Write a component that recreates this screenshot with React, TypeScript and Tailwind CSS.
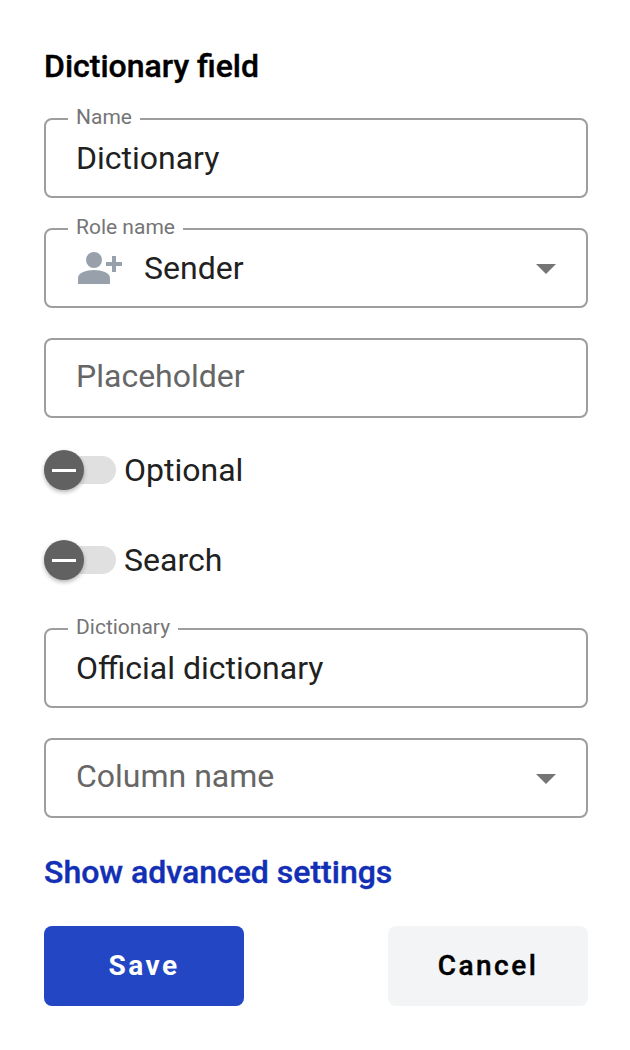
import { useState } from "react";
import type { ReactNode } from "react";

type FieldProps = {
  label?: string;
  select?: boolean;
  children: ReactNode;
};

function Field({ label, select, children }: FieldProps) {
  return (
    <div className="relative flex h-20 items-center justify-between rounded-lg border-2 border-[#9e9e9e] px-[30px] text-[32px] leading-10 text-[#212121]">
      {label && (
        <span className="absolute -top-[17px] left-[22px] bg-white px-2 text-[21px] leading-7 text-[#757575]">
          {label}
        </span>
      )}
      <div className="flex items-center">{children}</div>
      {select && (
        <svg className="mt-0.5 h-[10px] w-5" viewBox="0 0 20 10" fill="#757575">
          <path d="M0 0h20L10 10z" />
        </svg>
      )}
    </div>
  );
}

function PersonAddIcon() {
  return (
    <svg className="mr-[22px] h-8 w-[46px]" viewBox="0 0 46 32" fill="#98a1ab">
      <circle cx="18" cy="8" r="8" />
      <path d="M2 32v-6c0-5.300 8-8 16-8s16 2.700 16 8v6z" />
      <path d="M36 4h4v6h6v4h-6v6h-4v-6h-6v-4h6z" />
    </svg>
  );
}

function Toggle({ label }: { label: string }) {
  const [checked, setChecked] = useState(false);

  return (
    <button
      role="switch"
      aria-checked={checked}
      onClick={() => setChecked(!checked)}
      className="flex h-10 items-center gap-2 text-[32px] leading-10 text-[#212121]"
    >
      <span
        className={
          checked
            ? "flex h-7 w-[72px] items-center justify-end rounded-full bg-[#a7b5e8]"
            : "flex h-7 w-[72px] items-center rounded-full bg-[#e0e0e0]"
        }
      >
        <span className="flex size-10 items-center justify-center rounded-full bg-[#616161] shadow-[0_2px_4px_rgba(0,0,0,0.3)]">
          <span className="h-[3px] w-6 bg-white" />
        </span>
      </span>
      {label}
    </button>
  );
}

export default function App() {
  return (
    <div className="h-[1050px] w-[630px] bg-white px-11 pr-[42px] pt-[46px] font-['Roboto',sans-serif]">
      <h1 className="text-[32px] leading-10 font-medium text-black [-webkit-text-stroke:0.4px_black]">
        Dictionary field
      </h1>

      <div className="mt-8 flex flex-col gap-[30px]">
        <Field label="Name">Dictionary</Field>
        <Field label="Role name" select>
          <PersonAddIcon />
          Sender
        </Field>
        <Field>
          <span className="pb-1 text-[#666666]">Placeholder</span>
        </Field>
      </div>

      <div className="my-8 mb-12 flex flex-col gap-[50px]">
        <Toggle label="Optional" />
        <Toggle label="Search" />
      </div>

      <div className="flex flex-col gap-[30px]">
        <Field label="Dictionary">Official dictionary</Field>
        <Field select>
          <span className="pb-1 text-[#666666]">Column name</span>
        </Field>
      </div>

      <a className="mt-[34px] block text-[32px] leading-10 font-medium text-[#122fb5] [-webkit-text-stroke:0.4px_#122fb5]">
        Show advanced settings
      </a>

      <div className="mt-[34px] flex justify-between">
        <button className="h-20 w-[200px] rounded-lg bg-[#2346c4] text-[28px] font-bold tracking-[2.500px] text-white">
          Save
        </button>
        <button className="h-20 w-[200px] rounded-lg bg-[#f3f4f6] text-[28px] font-medium tracking-[2.500px] text-black [-webkit-text-stroke:0.4px_black]">
          Cancel
        </button>
      </div>
    </div>
  );
}
